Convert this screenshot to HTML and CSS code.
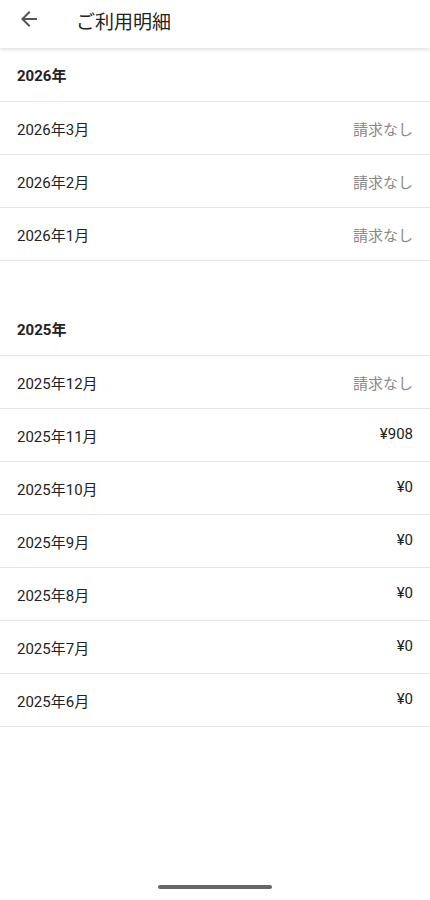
FILE: index.html
```html
<!DOCTYPE html>
<html lang="ja">
<head>
    <meta charset="UTF-8">
    <meta name="viewport" content="width=device-width, initial-scale=1.0">
    <title>ご利用明細</title>
    <link rel="stylesheet" href="styles.css">
</head>
<body>

<header class="app-bar">
    <span class="back">
        <svg width="24" height="24" viewBox="0 0 24 24"><path d="M20 11H7.83l5.59-5.59L12 4l-8 8 8 8 1.41-1.41L7.83 13H20v-2z" fill="#555"/></svg>
    </span>
    <h1>ご利用明細</h1>
</header>

<main>
    <section class="year">
        <div class="year-title">2026年</div>
        <div class="row"><span>2026年3月</span><span class="none">請求なし</span></div>
        <div class="row"><span>2026年2月</span><span class="none">請求なし</span></div>
        <div class="row"><span>2026年1月</span><span class="none">請求なし</span></div>
    </section>

    <section class="year">
        <div class="year-title">2025年</div>
        <div class="row"><span>2025年12月</span><span class="none">請求なし</span></div>
        <div class="row"><span>2025年11月</span><span class="amount">¥908</span></div>
        <div class="row"><span>2025年10月</span><span class="amount">¥0</span></div>
        <div class="row"><span>2025年9月</span><span class="amount">¥0</span></div>
        <div class="row"><span>2025年8月</span><span class="amount">¥0</span></div>
        <div class="row"><span>2025年7月</span><span class="amount">¥0</span></div>
        <div class="row"><span>2025年6月</span><span class="amount">¥0</span></div>
    </section>
</main>

<div class="home-bar"></div>

</body>
</html>
```

FILE: styles.css
```css
body {
    margin: 0;
    font-family: Roboto, "Noto Sans CJK JP", sans-serif;
    background: #fff;
    color: #222;
    height: 900px;
    position: relative;
}
.app-bar {
    height: 48px;
    display: flex;
    align-items: center;
    padding-left: 17px;
    box-shadow: 0 2px 4px rgba(0, 0, 0, 0.12);
    position: relative;
}
.back {
    display: flex;
    width: 24px;
    height: 24px;
    margin-top: -10px;
}
.app-bar h1 {
    margin: -8px 0 0 35px;
    font-size: 19px;
    font-weight: 400;
    color: #222;
}
.year + .year {
    margin-top: 41px;
}
.year-title {
    height: 53px;
    display: flex;
    align-items: center;
    padding-left: 17px;
    font-size: 15px;
    font-weight: 700;
    border-bottom: 1px solid #e6e6e6;
}
.row {
    height: 52px;
    display: flex;
    align-items: center;
    justify-content: space-between;
    padding: 0 17px;
    font-size: 15px;
    border-bottom: 1px solid #e6e6e6;
}
.row .none {
    color: #888;
}
.row .amount {
    color: #222;
    margin-top: -3px;
}
.home-bar {
    position: absolute;
    bottom: 11px;
    left: 158px;
    width: 114px;
    height: 4px;
    border-radius: 2px;
    background: #666;
}
```
